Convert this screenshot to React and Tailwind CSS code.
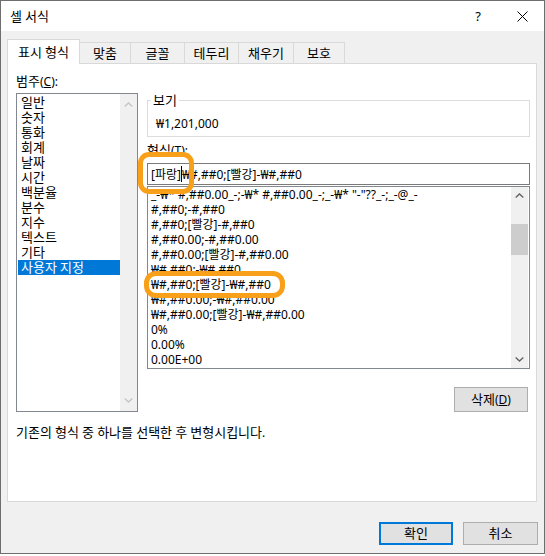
import React from 'react';

const ChevUp = ({ c }) => (
  <svg width="9" height="5" viewBox="0 0 9 5">
    <path d="M0.7 4.4L4.5 0.9L8.3 4.4" fill="none" stroke={c} strokeWidth="1.3" />
  </svg>
);
const ChevDown = ({ c }) => (
  <svg width="9" height="5" viewBox="0 0 9 5">
    <path d="M0.7 0.6L4.5 4.1L8.3 0.6" fill="none" stroke={c} strokeWidth="1.3" />
  </svg>
);

function k(s) {
  return s.split(/([\uAC00-\uD7A3]+)/).map((p, i) =>
    /[\uAC00-\uD7A3]/.test(p) ? (
      <span key={i} className="text-[13px]">
        {p}
      </span>
    ) : (
      p
    )
  );
}

const cats = ['일반', '숫자', '통화', '회계', '날짜', '시간', '백분율', '분수', '지수', '텍스트', '기타', '사용자 지정'];
const fmts = [
  '_-₩* #,##0.00_-;-₩* #,##0.00_-;_-₩* "-"??_-;_-@_-',
  '#,##0;-#,##0',
  '#,##0;[빨강]-#,##0',
  '#,##0.00;-#,##0.00',
  '#,##0.00;[빨강]-#,##0.00',
  '₩#,##0;-₩#,##0',
  '₩#,##0;[빨강]-₩#,##0',
  '₩#,##0.00;-₩#,##0.00',
  '₩#,##0.00;[빨강]-₩#,##0.00',
  '0%',
  '0.00%',
  '0.00E+00',
];
const tabs = [
  { t: '맞춤', w: 'w-[51px]' },
  { t: '글꼴', w: 'w-[54px]' },
  { t: '테두리', w: 'w-[54px]' },
  { t: '채우기', w: 'w-[55px]' },
  { t: '보호', w: 'w-[51px]' },
];

export default function App() {
  return (
    <div className="relative w-[545px] h-[556px] bg-white font-['Noto_Sans','Noto_Sans_CJK_KR',sans-serif] text-[12px] leading-[15px] text-black">
      <div className="flex flex-col w-[545px] h-[554px] border border-[#6e6e6e] bg-[#f0f0f0]">
        {/* title bar */}
        <div className="flex items-center h-[30px] bg-white pl-[9px] pr-[16px]">
          <span>{k('셀 서식')}</span>
          <span className="ml-auto text-[13px]">?</span>
          <svg className="ml-[36px]" width="11" height="11" viewBox="0 0 11 11">
            <path d="M0.5 0.5L10.5 10.5M10.5 0.5L0.5 10.5" stroke="#000" strokeWidth="1" fill="none" />
          </svg>
        </div>
        {/* tabs */}
        <div className="flex items-end h-[32px] pl-[6px]">
          <div className="relative z-10 -mb-px flex items-start justify-center pt-[5px] w-[73px] h-[25px] bg-white border-x border-t border-[#d9d9d9]">
            <span>{k('표시 형식')}</span>
          </div>
          {tabs.map((x) => (
            <div
              key={x.t}
              className={`flex items-center justify-center h-[21px] ${x.w} border-t border-r border-[#d9d9d9] bg-[#f0f0f0]`}
            >
              <span>{k(x.t)}</span>
            </div>
          ))}
        </div>
        {/* panel */}
        <div className="flex flex-col ml-[6px] w-[530px] h-[439px] border border-[#d9d9d9] bg-white pl-[8px] pr-[6px] pt-[10px]">
          <div>
            {k('범주')}(<span className="underline">C</span>):
          </div>
          <div className="flex mt-[4px] gap-[9px]">
            {/* category list */}
            <div className="flex w-[122px] h-[319px] border border-[#828790]">
              <div className="flex-1 pt-px pl-px">
                {cats.map((c) => (
                  <div
                    key={c}
                    className={
                      c === '사용자 지정'
                        ? 'h-[15px] pl-[3px] bg-[#0078d7] text-white'
                        : 'h-[15px] pl-[3px]'
                    }
                  >
                    {k(c)}
                  </div>
                ))}
              </div>
              <div className="flex flex-col items-center justify-between w-[17px] bg-[#f0f0f0] pt-[8px] pb-[8px]">
                <ChevUp c="#c4c4c4" />
                <ChevDown c="#c4c4c4" />
              </div>
            </div>
            {/* right column */}
            <div className="flex flex-col w-[383px]">
              <fieldset className="h-[44px] border border-[#dcdcdc] pl-[3px]">
                <legend className="px-[2px]">{k('보기')}</legend>
                <div className="mt-[8px] pl-[5px]">₩1,201,000</div>
              </fieldset>
              <div className="mt-[6px]">
                {k('형식')}(<span className="underline">T</span>):
              </div>
              <div className="mt-[5px] flex items-center h-[22px] border border-[#7a7a7a] pl-[3px] whitespace-pre">
                <span>[파랑]</span>
                <span className="inline-block w-px h-[16px] bg-black" />
                <span>₩#,##0;[빨강]-₩#,##0</span>
              </div>
              <div className="mt-px flex h-[183px] border border-[#828790]">
                <div className="flex-1 overflow-hidden whitespace-pre pl-[3px]">
                  {fmts.map((f) => (
                    <div key={f} className="h-[15px]">
                      {f}
                    </div>
                  ))}
                </div>
                <div className="flex flex-col w-[17px] mr-px bg-[#f0f0f0]">
                  <div className="flex items-center justify-center h-[17px]">
                    <ChevUp c="#606060" />
                  </div>
                  <div className="mt-[20px] h-[31px] bg-[#cdcdcd]" />
                  <div className="mt-auto flex items-center justify-center h-[17px]">
                    <ChevDown c="#606060" />
                  </div>
                </div>
              </div>
              <div className="self-end mr-[2px] mt-[18px] flex items-center justify-center w-[74px] h-[25px] border border-[#adadad] bg-[#e1e1e1]">
                <span>
                  {k('삭제')}(<span className="underline">D</span>)
                </span>
              </div>
            </div>
          </div>
          <div className="mt-[13px]">{k('기존의 형식 중 하나를 선택한 후 변형시킵니다.')}</div>
        </div>
        {/* footer */}
        <div className="flex justify-end gap-[10px] pr-[6px] mt-[20px]">
          <div className="flex items-center justify-center w-[74px] h-[23px] border-2 border-[#0078d7] bg-[#e1e1e1]">
            <span>{k('확인')}</span>
          </div>
          <div className="flex items-center justify-center w-[75px] h-[23px] border border-[#adadad] bg-[#e1e1e1]">
            <span>{k('취소')}</span>
          </div>
        </div>
      </div>
      {/* highlight marks */}
      <div className="absolute left-[138px] top-[152px] w-[56px] h-[42px] border-[5px] border-[#f8a01a] rounded-[11px]" />
      <div className="absolute left-[144px] top-[271px] w-[141px] h-[27px] border-[5px] border-[#f8a01a] rounded-[12px]" />
    </div>
  );
}
